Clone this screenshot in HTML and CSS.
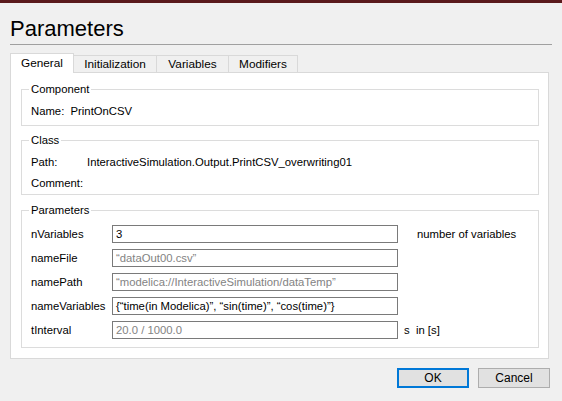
FILE: index.html
```html
<!DOCTYPE html>
<html>
<head>
<meta charset="utf-8">
<link rel="stylesheet" href="styles.css">
</head>
<body>
<div class="topbar"></div>
<h1 class="title">Parameters</h1>
<div class="rule"></div>
<div class="tabs">
  <div class="tab active">General</div>
  <div class="tab t-init">Initialization</div>
  <div class="tab t-vars">Variables</div>
  <div class="tab t-mods">Modifiers</div>
</div>
<div class="panel">
  <div class="group g-comp">
    <div class="legend">Component</div>
    <div class="line">Name:&nbsp; PrintOnCSV</div>
  </div>
  <div class="group g-class">
    <div class="legend">Class</div>
    <div class="kv"><span class="k">Path:</span><span>InteractiveSimulation.Output.PrintCSV_overwriting01</span></div>
    <div class="kv"><span class="k">Comment:</span><span></span></div>
  </div>
  <div class="group g-params">
    <div class="legend">Parameters</div>
    <div class="prow"><span class="pl">nVariables</span><div class="inp">3</div><span class="unit">number of variables</span></div>
    <div class="prow"><span class="pl">nameFile</span><div class="inp dim">“dataOut00.csv”</div><span class="unit"></span></div>
    <div class="prow"><span class="pl">namePath</span><div class="inp dim">“modelica://InteractiveSimulation/dataTemp”</div><span class="unit"></span></div>
    <div class="prow"><span class="pl">nameVariables</span><div class="inp">{“time(in Modelica)”, “sin(time)”, “cos(time)”}</div><span class="unit"></span></div>
    <div class="prow"><span class="pl">tInterval</span><div class="inp dim">20.0 / 1000.0</div><span class="unit u-s">s&nbsp; in [s]</span></div>
  </div>
</div>
<div class="buttons">
  <div class="btn ok">OK</div>
  <div class="btn">Cancel</div>
</div>
</body>
</html>
```
FILE: styles.css
```css
html, body {
  margin: 0;
  padding: 0;
  background: #f0f0f0;
  width: 562px;
  height: 401px;
  overflow: hidden;
  font-family: "Liberation Sans", Arial, sans-serif;
  font-size: 11.3px;
  color: #000;
}
.topbar {
  height: 3px;
  background: #5a1a1c;
}
.title {
  margin: 13px 0 0 10px;
  font-size: 22px;
  font-weight: normal;
  line-height: 25px;
  height: 25px;
}
.rule {
  margin: 3px 10px 0 10px;
  height: 1px;
  background: #a0a0a0;
}
.tabs {
  display: flex;
  align-items: flex-end;
  margin: 8px 0 0 10px;
  height: 19px;
  position: relative;
  z-index: 1;
  font-size: 11.8px;
}
.tab {
  box-sizing: border-box;
  height: 17px;
  border: 1px solid #d9d9d9;
  border-bottom: none;
  border-left: none;
  background: #f0f0f0;
  text-align: center;
  line-height: 17px;
}
.tab.active {
  height: 20px;
  width: 64px;
  background: #fff;
  border-left: 1px solid #d9d9d9;
  margin-bottom: -1px;
  line-height: 19px;
}
.t-init { width: 83px; }
.t-vars { width: 72px; }
.t-mods { width: 69px; }
.panel {
  box-sizing: border-box;
  margin-left: 10px;
  width: 539px;
  height: 287px;
  background: #fff;
  border: 1px solid #d9d9d9;
  padding: 16px 9px 0 10px;
}
.group {
  border: 1px solid #dcdcdc;
  padding-left: 9px;
}
.legend {
  margin-top: -8px;
  margin-left: -2px;
  background: #fff;
  padding: 0 2px;
  display: table;
  line-height: 15px;
  height: 15px;
}
.g-comp {
  height: 35px;
}
.line {
  margin-top: 6px;
  line-height: 16px;
}
.g-class {
  margin-top: 14px;
  height: 53px;
}
.kv {
  display: flex;
  line-height: 21px;
  height: 21px;
}
.legend + .kv { margin-top: 4px; }
.k { width: 56px; }
.g-params {
  margin-top: 15px;
  height: 136px;
}
.prow {
  display: flex;
  align-items: center;
  height: 18px;
  margin-bottom: 6px;
}
.g-params .legend + .prow { margin-top: 7px; }
.pl {
  width: 81px;
}
.inp {
  box-sizing: border-box;
  width: 286px;
  height: 18px;
  border: 1px solid #7a7a7a;
  padding-left: 3px;
  line-height: 16px;
  white-space: nowrap;
  overflow: hidden;
}
.inp.dim { color: #838383; }
.unit { margin-left: 19px; }
.u-s { margin-left: 6px; }
.buttons {
  display: flex;
  justify-content: flex-end;
  gap: 9px;
  margin: 9px 12px 0 0;
  font-size: 12px;
}
.btn {
  box-sizing: border-box;
  width: 72px;
  height: 20px;
  border: 1px solid #adadad;
  background: #e1e1e1;
  text-align: center;
  line-height: 18px;
}
.btn.ok {
  border: 2px solid #0078d7;
  line-height: 16px;
}
```
